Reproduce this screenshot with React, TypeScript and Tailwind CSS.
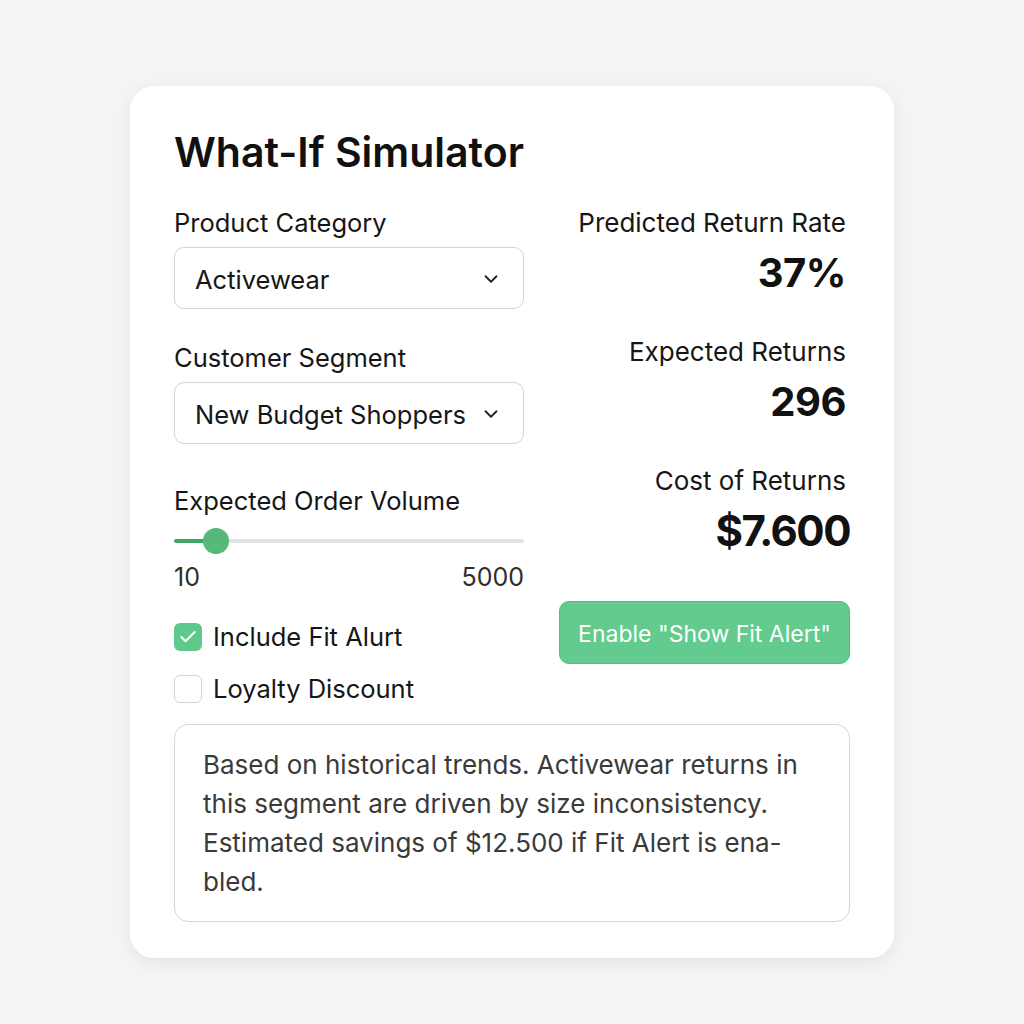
import React from "react";
import { ChevronDown, Check } from "lucide-react";

function SelectBox({ value }: { value: string }) {
	return (
		<div className="mt-2 flex h-[62px] items-center justify-between rounded-[10px] border border-[#d4d4d4] bg-white pl-5 pr-[21px]">
			<span className="pt-1 text-[25.5px] leading-8 text-[#161616]">{value}</span>
			<ChevronDown size={22} strokeWidth={2} className="mt-[2px] text-[#222]" />
		</div>
	);
}

function Metric({ label, value, big, top }: { label: string; value: string; big?: boolean; top: string }) {
	return (
		<div className={`flex flex-col items-end ${top}`}>
			<span className="pr-1 text-[26px] leading-8 text-[#161616]">{label}</span>
			{big ? (
				<span className="mt-2 text-[42px] font-bold leading-[52px] tracking-[-1.5px] text-[#111]">{value}</span>
			) : (
				<span className="mt-[10px] pr-1 text-[40px] font-bold leading-[48px] tracking-[-0.5px] text-[#111]">{value}</span>
			)}
		</div>
	);
}

export default function App() {
	const fill = ((216 - 174) / 350) * 100;

	return (
		<div className="flex min-h-screen justify-center bg-[#f4f4f4] pt-[86px] font-['Inter',sans-serif]">
			<div className="h-[872px] w-[764px] rounded-[24px] bg-white px-[44px] pt-[42px] shadow-[0_4px_16px_rgba(0,0,0,0.07)]">
				<h1 className="text-[41px] font-semibold leading-[48px] text-[#111]">What-If Simulator</h1>

				<div className="mt-[31px] grid grid-cols-[350px_1fr] gap-x-[35px]">
					<div className="flex flex-col">
						<span className="text-[25.5px] leading-8 text-[#161616]">Product Category</span>
						<SelectBox value="Activewear" />

						<span className="mt-[33px] text-[25.5px] leading-8 text-[#161616]">Customer Segment</span>
						<SelectBox value="New Budget Shoppers" />

						<span className="mt-[41px] text-[25.5px] leading-8 text-[#161616]">Expected Order Volume</span>
						<div className="relative mt-[11px] flex h-[26px] items-center">
							<div className="h-[4px] w-full rounded-full bg-[#e2e2e2]">
								<div className="h-full rounded-full bg-[#3fa867]" style={{ width: `${fill}%` }} />
							</div>
							<div
								className="absolute top-0 h-[26px] w-[26px] -translate-x-1/2 rounded-full bg-[#55b97c]"
								style={{ left: `${fill}%` }}
							/>
						</div>
						<div className="mt-[8px] flex justify-between text-[25px] leading-[30px] text-[#2e2e2e]">
							<span>10</span>
							<span>5000</span>
						</div>

						<label className="mt-[29px] flex h-8 items-center gap-[11px]">
							<span className="flex h-[28px] w-[28px] items-center justify-center rounded-[6px] bg-[#5ec98a]">
								<Check size={20} strokeWidth={2.5} className="text-white" />
							</span>
							<span className="text-[25.5px] leading-8 text-[#161616]">Include Fit Alurt</span>
						</label>
						<label className="mt-[20px] flex h-8 items-center gap-[11px]">
							<span className="h-[28px] w-[28px] rounded-[6px] border border-[#d4d4d4] bg-white" />
							<span className="text-[25.5px] leading-8 text-[#161616]">Loyalty Discount</span>
						</label>
					</div>

					<div className="flex flex-col">
						<Metric label="Predicted Return Rate" value="37%" top="" />
						<Metric label="Expected Returns" value="296" top="mt-[39px]" />
						<Metric label="Cost of Returns" value="$7.600" big top="mt-[39px]" />
						<button className="mt-[44px] h-[63px] rounded-[10px] border border-[#4fbf7c] bg-[#62cb8d] pt-1 text-[23px] text-white">
							Enable "Show Fit Alert"
						</button>
					</div>
				</div>

				<div className="mt-[19px] h-[198px] rounded-[14px] border border-[#d6d6d6] px-[28px] pt-[20px]">
					<p className="whitespace-nowrap text-[26px] leading-[39px] text-[#3a3a3a]">
						Based on historical trends. Activewear returns in
						<br />
						this segment are driven by size inconsistency.
						<br />
						Estimated savings of $12.500 if Fit Alert is ena-
						<br />
						bled.
					</p>
				</div>
			</div>
		</div>
	);
}
